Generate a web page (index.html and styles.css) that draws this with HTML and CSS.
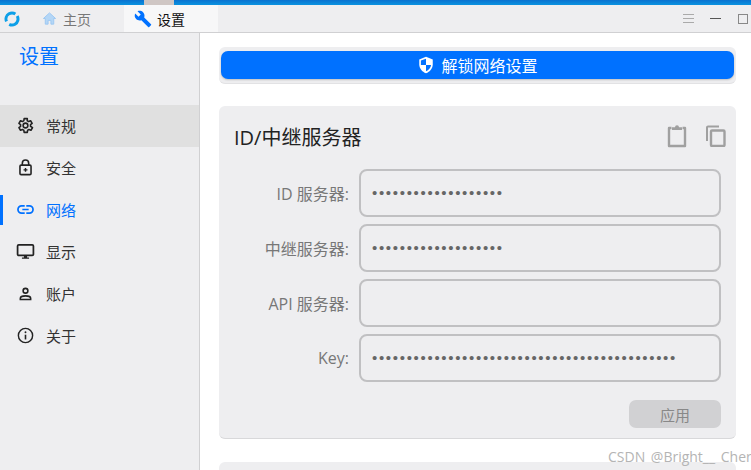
FILE: index.html
```html
<!DOCTYPE html>
<html lang="zh">
<head>
<meta charset="utf-8">
<title>设置</title>
<link rel="stylesheet" href="styles.css">
</head>
<body>
<div class="topstrip"><span class="strip-patch"></span></div>
<header class="titlebar">
  <svg class="logo" viewBox="0 0 16 16"><circle cx="8" cy="8" r="6" fill="none" stroke="#0d9fe8" stroke-width="3" stroke-dasharray="15 4" transform="rotate(-30 8 8)"/></svg>
  <div class="tab">
    <svg class="tab-icon" viewBox="0 0 16 16"><path d="M8 2 1.500 8H3.500V14H6.500V10H9.500V14H12.500V8H14.500Z" fill="#b4d6f6" stroke="#9cc8f2" stroke-width="1"/></svg>
    <span>主页</span>
  </div>
  <div class="tab tab-active">
    <svg class="tab-icon tab-icon-lg" viewBox="0 0 24 24"><path d="M22.700 19 13.600 9.900c.9-2.300.4-5-1.500-6.900-2-2-5-2.400-7.400-1.300L9 6 6 9 1.600 4.700C.4 7.100.9 10.100 2.900 12.100c1.900 1.900 4.600 2.400 6.900 1.500l9.100 9.100c.4.400 1 .4 1.400 0l2.300-2.300c.5-.4.500-1.100.100-1.400z" fill="#0071ff"/></svg>
    <span>设置</span>
  </div>
  <div class="win-controls">
    <svg class="win-btn" viewBox="0 0 11 9"><path d="M0 .5H11M0 4.500H11M0 8.500H11" stroke="#aaa" stroke-width="1"/></svg>
    <svg class="win-btn win-min" viewBox="0 0 11 9"><path d="M0 4.500H11" stroke="#555" stroke-width="1"/></svg>
    <svg class="win-btn win-max" viewBox="0 0 10 10"><rect x=".5" y=".5" width="9" height="9" fill="none" stroke="#888" stroke-width="1"/></svg>
  </div>
</header>
<div class="body-row">
  <aside class="sidebar">
    <h1 class="side-title">设置</h1>
    <nav class="side-nav">
      <div class="nav-item nav-hover">
        <svg class="nav-icon" viewBox="0 0 24 24"><path d="M19.400 13a7.500 7.500 0 0 0 0-2l2.100-1.600-2-3.400-2.500 1a7.500 7.500 0 0 0-1.700-1L15.400 3.300h-4l-.4 2.700a7.500 7.500 0 0 0-1.700 1l-2.500-1-2 3.400L6.900 11a7.500 7.500 0 0 0 0 2l-2.100 1.600 2 3.400 2.500-1a7.500 7.500 0 0 0 1.700 1l.4 2.700h4l.4-2.700a7.500 7.500 0 0 0 1.700-1l2.500 1 2-3.400z" transform="translate(-1.100 0)" fill="none" stroke="#222" stroke-width="2" stroke-linejoin="round"/><circle cx="12" cy="12" r="3" fill="none" stroke="#222" stroke-width="2"/></svg>
        <span>常规</span>
      </div>
      <div class="nav-item">
        <svg class="nav-icon" viewBox="0 0 24 24"><path d="M8 9V6.500a4 4 0 0 1 8 0V9" fill="none" stroke="#222" stroke-width="2"/><rect x="5" y="9" width="14" height="12" rx="1.500" fill="none" stroke="#222" stroke-width="2"/><path d="M12 12.500v5M9.500 15h5" stroke="#222" stroke-width="1.800"/></svg>
        <span>安全</span>
      </div>
      <div class="nav-item nav-active">
        <svg class="nav-icon" viewBox="0 0 24 24"><path d="M11 7.500H7a4.500 4.500 0 0 0 0 9h4M13 7.500h4a4.500 4.500 0 0 1 0 9h-4M8 12h8" fill="none" stroke="#0071ff" stroke-width="2.200"/></svg>
        <span>网络</span>
      </div>
      <div class="nav-item">
        <svg class="nav-icon" viewBox="0 0 24 24"><rect x="2" y="3.500" width="20" height="13.500" rx="1.500" fill="none" stroke="#222" stroke-width="2.200"/><path d="M10 17h4v2.500h2.500V21h-9v-1.500H10z" fill="#222"/></svg>
        <span>显示</span>
      </div>
      <div class="nav-item">
        <svg class="nav-icon" viewBox="0 0 24 24"><circle cx="12" cy="8.500" r="3" fill="none" stroke="#222" stroke-width="2"/><path d="M5.500 19.500V18c0-2 3.500-3 6.500-3s6.500 1 6.500 3v1.500z" fill="none" stroke="#222" stroke-width="2"/></svg>
        <span>账户</span>
      </div>
      <div class="nav-item">
        <svg class="nav-icon" viewBox="0 0 24 24"><circle cx="12" cy="12" r="9" fill="none" stroke="#222" stroke-width="1.800"/><path d="M12 11v6" stroke="#222" stroke-width="2"/><circle cx="12" cy="7.800" r="1.200" fill="#222"/></svg>
        <span>关于</span>
      </div>
    </nav>
  </aside>
  <main class="content">
    <div class="unlock-card">
      <button class="unlock-btn" type="button">
        <svg class="shield" viewBox="0 0 24 24"><path d="M12 1 3 4.500V11c0 5.500 3.800 10.200 9 12 5.200-1.800 9-6.500 9-12V4.500z" fill="#fff"/><path d="M12 3.500V12H5.200V5.900zM12 12h6.800c-.5 3.900-3.200 7-6.800 8.400z" fill="#0071ff"/></svg>
        <span>解锁网络设置</span>
      </button>
    </div>
    <section class="card">
      <div class="card-head">
        <h2 class="card-title">ID/中继服务器</h2>
        <div class="card-tools">
          <svg class="tool" viewBox="0 0 20 24"><path d="M4.500 4H2v18h16V4h-2.500" fill="none" stroke="#a0a0a0" stroke-width="2.400" stroke-linejoin="round"/><path d="M5 6V3.200h3a2 2 0 0 1 4 0h3V6z" fill="#a0a0a0"/></svg>
          <svg class="tool tool-copy" viewBox="0 0 21 22"><path d="M2 16V2.500a1 1 0 0 1 1-1h11" fill="none" stroke="#a0a0a0" stroke-width="2"/><rect x="6" y="5.500" width="13.500" height="15.500" rx="1" fill="none" stroke="#a0a0a0" stroke-width="2.400"/></svg>
        </div>
      </div>
      <div class="form">
        <div class="field"><label class="field-label">ID 服务器:</label><div class="field-input">•••••••••••••••••••</div></div>
        <div class="field"><label class="field-label">中继服务器:</label><div class="field-input">•••••••••••••••••••</div></div>
        <div class="field"><label class="field-label">API 服务器:</label><div class="field-input"></div></div>
        <div class="field"><label class="field-label">Key:</label><div class="field-input">••••••••••••••••••••••••••••••••••••••••••••</div></div>
      </div>
      <div class="actions"><button class="apply" type="button">应用</button></div>
    </section>
    <div class="card-next"></div>
  </main>
</div>
<div class="watermark">CSDN @Bright__ Cher</div>
</body>
</html>
```
FILE: styles.css
```css
* { box-sizing: border-box; }
html, body { margin: 0; padding: 0; }
body {
  width: 751px;
  height: 470px;
  overflow: hidden;
  position: relative;
  display: flex;
  flex-direction: column;
  background: #fff;
  font-family: "Open Sans", "Noto Sans CJK SC", sans-serif;
  color: #222;
}
.topstrip {
  height: 5px;
  flex: none;
  background: linear-gradient(#0a72d0, #0a93e0);
  padding-left: 144px;
}
.strip-patch {
  display: block;
  width: 30px;
  height: 5px;
  background: #cfc6c4;
}
.titlebar {
  height: 28px;
  flex: none;
  display: flex;
  align-items: center;
  background: #eeeef0;
  border-bottom: 1px solid #d0d0d2;
  padding-left: 4px;
}
.logo { width: 16px; height: 16px; flex: none; margin-right: 22px; }
.tab {
  display: flex;
  align-items: center;
  gap: 6px;
  height: 27px;
  width: 82px;
  font-size: 14px;
  color: #777;
}
.tab-active {
  width: 94px;
  padding-left: 10px;
  gap: 5px;
  background: #f7f7f8;
  color: #111;
}
.tab-icon { width: 15px; height: 15px; flex: none; }
.tab-icon-lg { width: 18px; height: 18px; }
.win-controls { margin-left: auto; display: flex; align-items: center; gap: 16px; padding-right: 3px; }
.win-btn { width: 11px; height: 9px; display: block; }
.win-max { width: 10px; height: 10px; margin-left: 1px; }
.body-row { flex: 1; display: flex; min-height: 0; }
.sidebar {
  width: 200px;
  flex: none;
  background: #eeeef0;
  border-right: 1px solid #d0d0d2;
}
.side-title {
  margin: 0;
  padding: 12px 0 0 19px;
  height: 72px;
  font-size: 20px;
  font-weight: 400;
  line-height: 24px;
  color: #0071ff;
}
.nav-item {
  height: 42px;
  display: flex;
  align-items: center;
  padding: 0 0 2px 16px;
  gap: 11px;
  font-size: 15px;
  color: #333;
}
.nav-hover { background: #e0e0e0; }
.nav-active {
  color: #0071ff;
  background: linear-gradient(#0071ff, #0071ff) left 6px / 3px 30px no-repeat;
}
.nav-icon { width: 19px; height: 19px; flex: none; }
.content { flex: 1; padding: 14px 15px 0 19px; min-width: 0; }
.unlock-card {
  height: 37px;
  padding: 4px 2px 5px;
  background: #eeeef0;
  border-radius: 6px;
  border-bottom: 1px solid #e2e2e4;
}
.unlock-btn {
  display: flex;
  align-items: center;
  justify-content: center;
  gap: 6px;
  width: 100%;
  height: 28px;
  border: 0;
  padding: 0;
  border-radius: 7px;
  background: #0071ff;
  color: #fff;
  font: inherit;
  font-size: 16px;
  box-shadow: 0 1px 2px rgba(0, 0, 0, .2);
}
.shield { width: 18px; height: 18px; flex: none; }
.card {
  margin-top: 22px;
  height: 333px;
  background: #eeeef0;
  border-radius: 6px;
  border-bottom: 1px solid #d8d8da;
  padding: 0 15px 0 15px;
}
.card-head { height: 63px; display: flex; align-items: center; justify-content: space-between; }
.card-title { margin: 0; font-size: 20px; font-weight: 400; color: #222; position: relative; top: -1px; }
.card-tools { display: flex; align-items: center; gap: 18px; padding-right: 0; position: relative; top: -2px; }
.tool { width: 20px; height: 24px; display: block; }
.tool-copy { width: 21px; height: 22px; margin-right: -5px; }
.form { display: flex; flex-direction: column; gap: 7px; }
.field { display: flex; align-items: center; gap: 10px; }
.field-label { width: 115px; flex: none; text-align: right; font-size: 16px; color: #777; }
.field-input {
  width: 362px;
  height: 48px;
  border: 2px solid #c0c0c2;
  border-radius: 8px;
  padding-left: 11px;
  font-family: "Liberation Sans", sans-serif;
  font-size: 15px;
  letter-spacing: 1.680px;
  line-height: 43px;
  color: #666;
  white-space: nowrap;
  overflow: hidden;
}
.actions { display: flex; justify-content: flex-end; margin-top: 18px; }
.apply {
  width: 92px;
  height: 28px;
  border: 0;
  border-radius: 7px;
  background: #d1d1d3;
  color: #888;
  font: inherit;
  font-size: 15px;
}
.card-next {
  margin-top: 23px;
  height: 40px;
  background: #eeeef0;
  border-radius: 6px;
}
.watermark {
  position: absolute;
  left: 608px;
  top: 449px;
  font-size: 14px;
  line-height: 16px;
  color: #b4b4b4;
  word-spacing: 2px;
  white-space: nowrap;
}
```
